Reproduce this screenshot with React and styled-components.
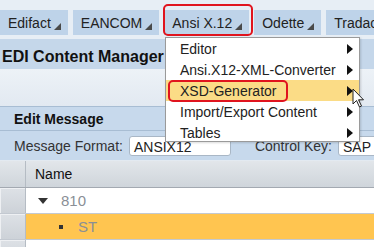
import styled, { createGlobalStyle } from 'styled-components';

const Global = createGlobalStyle`
    html, body {
        margin: 0;
        padding: 0;
        overflow: hidden;
        background: #fff;
    }
    body {
        font-family: 'Liberation Sans', Arial, sans-serif;
    }
`;

const tabs = ['Edifact', 'EANCOM', 'Ansi X.12', 'Odette', 'Tradacoms'];
const items = [
    { label: 'Editor' },
    { label: 'Ansi.X12-XML-Converter' },
    { label: 'XSD-Generator', active: true },
    { label: 'Import/Export Content' },
    { label: 'Tables' },
];

function Caret() {
    return (
        <svg width="7" height="7" viewBox="0 0 7 7">
            <polygon points="7,0 7,7 0,7" fill="#4a4a4a" />
        </svg>
    );
}

function Arrow() {
    return (
        <svg width="6" height="10" viewBox="0 0 6 10">
            <polygon points="0,0 6,5 0,10" fill="#111" />
        </svg>
    );
}

function Cursor() {
    return (
        <svg width="14" height="20" viewBox="0 0 14 20">
            <path d="M1 1 L1 16 L4.5 12.5 L7.5 19 L9.5 18 L6.5 11.8 L11.5 11.8 Z"
                fill="#fff" stroke="#222" strokeWidth="1" strokeLinejoin="round" />
        </svg>
    );
}

export default function App() {
    return (
        <Page>
            <Global />
            <TabStrip>
                {tabs.map(t => (
                    <Tab key={t}>
                        {t}
                        <CaretBox><Caret /></CaretBox>
                    </Tab>
                ))}
            </TabStrip>
            <Title>EDI Content Manager</Title>
            <Spacer />
            <Panel>
                <PanelHead>Edit Message</PanelHead>
                <FormRow>
                    <Label>Message Format:</Label>
                    <Field $w="102px">ANSIX12</Field>
                    <Label $ml="24px">Control Key:</Label>
                    <Field $w="60px">SAP</Field>
                </FormRow>
            </Panel>
            <Table>
                <HeadRow>
                    <Selector $head />
                    <HeadCell>Name</HeadCell>
                </HeadRow>
                <Row>
                    <Selector />
                    <Cell $indent="12px">
                        <Tri />810
                    </Cell>
                </Row>
                <Row $selected>
                    <Selector />
                    <Cell $indent="33px">
                        <Dot />ST
                    </Cell>
                </Row>
                <Row>
                    <Selector />
                    <Cell />
                </Row>
            </Table>

            <Menu>
                {items.map(i => (
                    <Item key={i.label} $active={i.active}>
                        <span>{i.label}</span>
                        <Arrow />
                    </Item>
                ))}
            </Menu>
            <Mark $x="163px" $y="4px" $w="90px" $h="32px" />
            <Mark $x="168px" $y="80px" $w="120px" $h="22px" />
            <Pointer><Cursor /></Pointer>
        </Page>
    );
}

const Page = styled.div`
    position: relative;
    width: 374px;
    height: 247px;
    overflow: hidden;
    display: flex;
    flex-direction: column;
    background: #fff;
    & > * {
        flex-shrink: 0;
    }
`;

const TabStrip = styled.div`
    display: flex;
    gap: 5px;
    padding: 10px 0 4px 0;
    background: #e7eef5;
`;

const Tab = styled.div`
    flex: none;
    position: relative;
    height: 25px;
    display: flex;
    align-items: center;
    padding: 0 17px 0 8px;
    background: #bed3e9;
    color: #222;
    font-size: 14px;
    white-space: nowrap;
`;

const CaretBox = styled.span`
    position: absolute;
    right: 7px;
    bottom: 5px;
    display: flex;
`;

const Title = styled.div`
    height: 25px;
    padding-top: 5px;
    display: flex;
    align-items: center;
    padding-left: 2px;
    background: #c5d7ea;
    font-size: 16px;
    font-weight: bold;
    color: #111;
`;

const Spacer = styled.div`
    height: 37px;
    background: linear-gradient(#edf2f7, #e2e9f1);
`;

const Panel = styled.div`
    background: #c7d9ec;
    border-top: 1px solid #a8bdd3;
`;

const PanelHead = styled.div`
    height: 23px;
    display: flex;
    align-items: center;
    padding-left: 14px;
    font-size: 14px;
    font-weight: bold;
    color: #111;
    border-bottom: 1px solid #a8bdd3;
`;

const FormRow = styled.div`
    height: 29px;
    display: flex;
    align-items: center;
    padding-left: 14px;
    font-size: 14px;
    color: #333;
`;

const Label = styled.span`
    margin-left: ${p => p.$ml || '0'};
    margin-right: 6px;
    white-space: nowrap;
`;

const Field = styled.span`
    flex: none;
    width: ${p => p.$w};
    height: 20px;
    box-sizing: border-box;
    padding: 1px 4px;
    background: #fff;
    border: 1px solid #a9b7c6;
    border-radius: 3px;
    font-size: 14px;
    color: #222;
    line-height: 18px;
`;

const Table = styled.div`
    display: flex;
    flex-direction: column;
    border-top: 1px solid #e3eaf1;
    & > * {
        flex-shrink: 0;
    }
`;

const HeadRow = styled.div`
    display: flex;
    height: 26px;
    background: linear-gradient(#e2e6ea, #cfd5db);
    border-bottom: 1px solid #a3a9b1;
`;

const Row = styled.div`
    display: flex;
    height: 25px;
    background: ${p => (p.$selected ? '#ffc550' : '#fff')};
    border-bottom: 1px solid #c3c9d1;
`;

const Selector = styled.div`
    flex: none;
    width: 26px;
    box-sizing: border-box;
    border-right: 1px solid #b5bcc4;
    background: ${p => (p.$head ? 'transparent' : 'linear-gradient(#dde1e6, #cdd2d8)')};
    box-shadow: ${p => (p.$head ? 'none' : 'inset 1px 1px 0 #eef0f3')};
`;

const HeadCell = styled.div`
    display: flex;
    align-items: center;
    padding-left: 9px;
    font-size: 14px;
    color: #111;
`;

const Cell = styled.div`
    flex: 1;
    display: flex;
    align-items: center;
    padding-left: ${p => p.$indent || '0'};
    font-size: 15px;
    color: #8a8f96;
`;

const Tri = styled.span`
    width: 0;
    height: 0;
    border-left: 5px solid transparent;
    border-right: 5px solid transparent;
    border-top: 6px solid #333;
    margin-right: 13px;
`;

const Dot = styled.span`
    width: 4px;
    height: 4px;
    background: #333;
    margin-right: 15px;
`;

const Menu = styled.div`
    position: absolute;
    left: 165px;
    top: 37px;
    width: 195px;
    height: 105px;
    box-sizing: border-box;
    overflow: hidden;
    background: #fff;
    border: 1px solid #9a9a9a;
    box-shadow: 1px 1px 2px rgba(0, 0, 0, 0.15);
    display: flex;
    flex-direction: column;
`;

const Item = styled.div`
    flex: none;
    height: 21px;
    display: flex;
    align-items: center;
    justify-content: space-between;
    padding: 0 6px 0 14px;
    background: ${p => (p.$active ? '#fbdc86' : 'transparent')};
    font-size: 14px;
    color: #222;
`;

const Mark = styled.div`
    position: absolute;
    left: ${p => p.$x};
    top: ${p => p.$y};
    width: ${p => p.$w};
    height: ${p => p.$h};
    box-sizing: border-box;
    border: 2px solid #e0141e;
    border-radius: 5px;
    pointer-events: none;
`;

const Pointer = styled.div`
    position: absolute;
    left: 352px;
    top: 88px;
    display: flex;
`;
